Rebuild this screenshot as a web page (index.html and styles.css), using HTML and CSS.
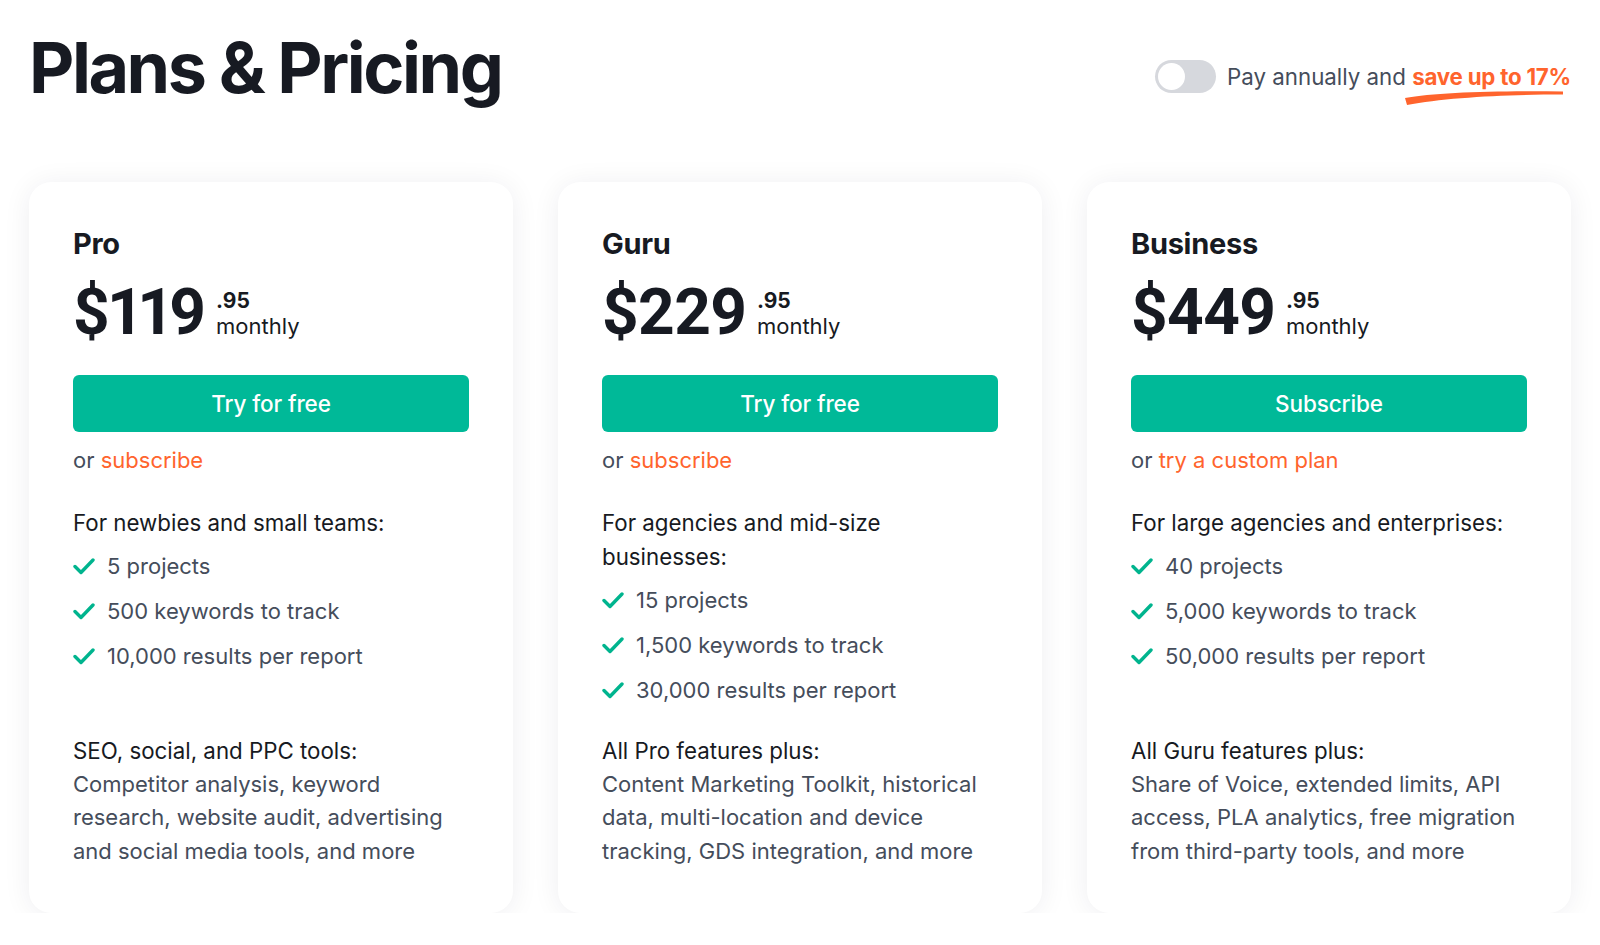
FILE: index.html
```html
<!DOCTYPE html>
<html lang="en">
<head>
<meta charset="utf-8">
<title>Plans &amp; Pricing</title>
<link rel="stylesheet" href="styles.css">
</head>
<body>
<div class="page">
  <header class="header">
    <h1 class="title">Plans &amp; Pricing</h1>
    <div class="billing">
      <span class="toggle"><span class="knob"></span></span>
      <span class="billing-text">Pay annually and <span class="save">save up to 17%<svg class="swoosh" viewBox="0 0 156 16" preserveAspectRatio="none"><path d="M0 9 C 30 3.5, 90 1.5, 156 2.5 L 156 5.5 C 100 5.5, 40 8.5, 2 16 Z" fill="#ff642d"/></svg></span></span>
    </div>
  </header>

  <main class="cards">
    <section class="card">
      <h2 class="plan">Pro</h2>
      <div class="price"><span class="amount">$119</span><span class="price-side"><span class="cents">.95</span><span class="period">monthly</span></span></div>
      <a class="btn">Try for free</a>
      <p class="alt">or <span class="link">subscribe</span></p>
      <div class="features">
        <p class="feat-head">For newbies and small teams:</p>
        <ul class="list">
          <li><svg class="check" viewBox="0 0 22 18"><path d="M2 9.5 L8 15.5 L20 3" /></svg>5 projects</li>
          <li><svg class="check" viewBox="0 0 22 18"><path d="M2 9.5 L8 15.5 L20 3" /></svg>500 keywords to track</li>
          <li><svg class="check" viewBox="0 0 22 18"><path d="M2 9.5 L8 15.5 L20 3" /></svg>10,000 results per report</li>
        </ul>
      </div>
      <p class="feat-head">SEO, social, and PPC tools:</p>
      <p class="desc">Competitor analysis, keyword research, website audit, advertising and social media tools, and more</p>
    </section>

    <section class="card">
      <h2 class="plan">Guru</h2>
      <div class="price"><span class="amount">$229</span><span class="price-side"><span class="cents">.95</span><span class="period">monthly</span></span></div>
      <a class="btn">Try for free</a>
      <p class="alt">or <span class="link">subscribe</span></p>
      <div class="features">
        <p class="feat-head">For agencies and mid-size businesses:</p>
        <ul class="list">
          <li><svg class="check" viewBox="0 0 22 18"><path d="M2 9.5 L8 15.5 L20 3" /></svg>15 projects</li>
          <li><svg class="check" viewBox="0 0 22 18"><path d="M2 9.5 L8 15.5 L20 3" /></svg>1,500 keywords to track</li>
          <li><svg class="check" viewBox="0 0 22 18"><path d="M2 9.5 L8 15.5 L20 3" /></svg>30,000 results per report</li>
        </ul>
      </div>
      <p class="feat-head">All Pro features plus:</p>
      <p class="desc">Content Marketing Toolkit, historical data, multi-location and device tracking, GDS integration, and more</p>
    </section>

    <section class="card">
      <h2 class="plan">Business</h2>
      <div class="price"><span class="amount">$449</span><span class="price-side"><span class="cents">.95</span><span class="period">monthly</span></span></div>
      <a class="btn">Subscribe</a>
      <p class="alt">or <span class="link">try a custom plan</span></p>
      <div class="features">
        <p class="feat-head">For large agencies and enterprises:</p>
        <ul class="list">
          <li><svg class="check" viewBox="0 0 22 18"><path d="M2 9.5 L8 15.5 L20 3" /></svg>40 projects</li>
          <li><svg class="check" viewBox="0 0 22 18"><path d="M2 9.5 L8 15.5 L20 3" /></svg>5,000 keywords to track</li>
          <li><svg class="check" viewBox="0 0 22 18"><path d="M2 9.5 L8 15.5 L20 3" /></svg>50,000 results per report</li>
        </ul>
      </div>
      <p class="feat-head">All Guru features plus:</p>
      <p class="desc">Share of Voice, extended limits, API access, PLA analytics, free migration from third-party tools, and more</p>
    </section>
  </main>
</div>
</body>
</html>
```

FILE: styles.css
```css
* { box-sizing: border-box; }

html, body {
  margin: 0;
  padding: 0;
  background: #ffffff;
}

body {
  font-family: Inter, "Noto Sans", "Liberation Sans", sans-serif;
  color: #171a22;
}

.page {
  padding: 26px 29px 0 29px;
}

.header {
  display: flex;
  justify-content: space-between;
  align-items: flex-start;
}

.title {
  margin: 0;
  font-size: 70px;
  line-height: 84px;
  font-weight: 700;
  letter-spacing: -0.035em;
  color: #171a22;
}

.billing {
  display: flex;
  align-items: center;
  gap: 11px;
  margin-top: 34px;
}

.toggle {
  display: block;
  width: 61px;
  height: 33px;
  border-radius: 17px;
  background: #d6d8dd;
  padding: 3px;
}

.knob {
  display: block;
  width: 27px;
  height: 27px;
  border-radius: 50%;
  background: #ffffff;
}

.billing-text {
  font-size: 22.3px;
  line-height: 30px;
  color: #454d5b;
}

.save {
  position: relative;
  font-weight: 700;
  color: #ff642d;
  letter-spacing: -0.01em;
}

.swoosh {
  position: absolute;
  left: -7px;
  top: 26px;
  width: 158px;
  height: 16px;
}

.cards {
  display: grid;
  grid-template-columns: repeat(3, 1fr);
  gap: 45px;
  margin-top: 72px;
}

.card {
  background: #ffffff;
  border-radius: 22px;
  box-shadow: 0 2px 28px rgba(20, 30, 50, 0.07);
  padding: 45px 44px 45px 44px;
}

.plan {
  margin: 0;
  font-size: 29px;
  line-height: 34px;
  font-weight: 700;
  letter-spacing: -0.01em;
}

.price {
  display: flex;
  align-items: center;
  gap: 10px;
  margin-top: 21px;
  height: 62px;
}

.amount {
  font-family: Roboto, Inter, sans-serif;
  font-size: 64px;
  line-height: 62px;
  font-weight: 700;
  letter-spacing: -0.01em;
  font-variant-numeric: proportional-nums;
  font-feature-settings: "pnum" 1;
}

.price-side {
  display: flex;
  flex-direction: column;
  margin-top: 2px;
}

.cents {
  font-size: 21px;
  line-height: 25px;
  font-weight: 700;
}

.period {
  font-size: 22px;
  line-height: 27px;
  color: #171a22;
}

.btn {
  display: flex;
  align-items: center;
  justify-content: center;
  height: 57px;
  margin-top: 31px;
  border-radius: 6px;
  background: #00b998;
  color: #ffffff;
  font-size: 22.5px;
  font-weight: 500;
  letter-spacing: -0.005em;
}

.alt {
  margin: 14px 0 0;
  font-size: 22px;
  line-height: 29px;
  color: #454d5b;
}

.link {
  color: #ff642d;
}

.features {
  margin-top: 31px;
  min-height: 228px;
}

.feat-head {
  margin: 0;
  font-size: 22.3px;
  line-height: 33.5px;
  color: #171a22;
}

.list {
  list-style: none;
  margin: 4px 0 0;
  padding: 0;
}

.list li {
  display: flex;
  align-items: center;
  height: 45px;
  font-size: 22px;
  color: #454d5b;
}

.check {
  width: 22px;
  height: 18px;
  margin-right: 12px;
  fill: none;
  stroke: #00b48e;
  stroke-width: 3.4;
  stroke-linecap: round;
  stroke-linejoin: round;
}

.desc {
  margin: 0;
  font-size: 22px;
  line-height: 33.5px;
  color: #454d5b;
}
```
